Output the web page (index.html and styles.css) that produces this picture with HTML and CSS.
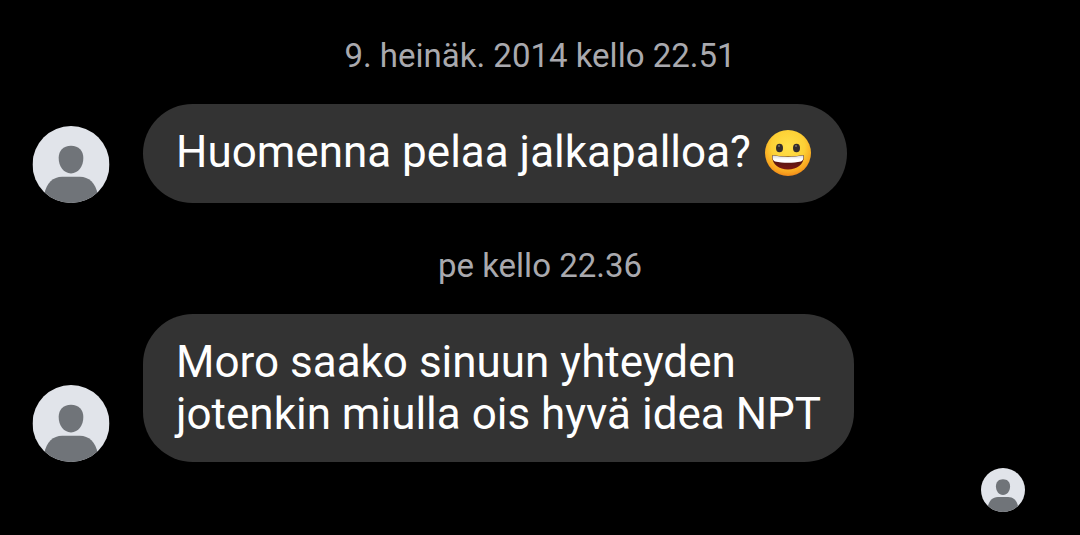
FILE: index.html
```
<!DOCTYPE html>
<html lang="fi">
<head>
    <meta charset="UTF-8">
    <meta name="viewport" content="width=device-width, initial-scale=1.0">
    <title>Keskustelu</title>
    <link rel="stylesheet" href="styles.css">
</head>
<body>
    <!-- Shared avatar picture -->
    <svg class="symbols" aria-hidden="true">
        <symbol id="avatar" viewBox="0 0 78 78">
            <clipPath id="avatar-clip"><circle cx="39" cy="39" r="39"/></clipPath>
            <g clip-path="url(#avatar-clip)">
                <rect width="78" height="78" fill="#e1e4ea"/>
                <path d="M39 20c8 0 12.500 5 12.500 12.500C51.500 41 46.500 48 39 48s-12.500-7-12.500-15.500C26.500 25 31 20 39 20z" fill="#707479"/>
                <path d="M12 78V69c2-11 9-17.500 18-17.500h18c9 0 16 6.500 18 17.500v9z" fill="#707479"/>
            </g>
        </symbol>
    </svg>

    <main class="chat">
        <time class="timestamp">9. heinäk. 2014 kello 22.51</time>
        <div class="message">
            <svg class="avatar" role="img" aria-label="Profiilikuva"><use href="#avatar"/></svg>
            <p class="bubble">Huomenna pelaa jalkapalloa?
                <svg class="emoji" viewBox="0 0 46 46" role="img" aria-label="Virnistävä naama">
                    <defs>
                        <radialGradient id="face" cx="50%" cy="36%" r="66%">
                            <stop offset="0" stop-color="#ffe14a"/>
                            <stop offset="0.55" stop-color="#fdd035"/>
                            <stop offset="0.85" stop-color="#f9a51f"/>
                            <stop offset="1" stop-color="#ee8318"/>
                        </radialGradient>
                        <linearGradient id="mouth" x1="0" y1="0" x2="0" y2="1">
                            <stop offset="0" stop-color="#3c1510"/>
                            <stop offset="1" stop-color="#7b1712"/>
                        </linearGradient>
                        <linearGradient id="teeth" x1="0" y1="0" x2="0" y2="1">
                            <stop offset="0" stop-color="#d8d8d8"/>
                            <stop offset="0.5" stop-color="#ffffff"/>
                        </linearGradient>
                    </defs>
                    <circle cx="23" cy="23" r="23" fill="url(#face)"/>
                    <ellipse cx="14.500" cy="18" rx="3.500" ry="4.300" fill="#332c2c"/>
                    <ellipse cx="31.500" cy="18" rx="3.500" ry="4.300" fill="#332c2c"/>
                    <circle cx="14" cy="16" r="1" fill="#77706a"/>
                    <circle cx="31" cy="16" r="1" fill="#77706a"/>
                    <path d="M7 26.500c0-1 .7-1.500 1.700-1.300 9 1.800 19.600 1.800 28.600 0 1-.2 1.700.3 1.700 1.300C38.500 34.500 32 39.500 23 39.500S7.500 34.500 7 26.500z" fill="url(#mouth)"/>
                    <path d="M7.500 26.500c0-.8.500-1 1.200-.9 9 1.900 19.600 1.900 28.600 0 .7-.1 1.200.1 1.200.9 0 2.500-.8 4.300-2.500 4.900-8 1.800-18 1.800-26 0-1.700-.6-2.500-2.400-2.500-4.900z" fill="url(#teeth)"/>
                </svg>
            </p>
        </div>

        <time class="timestamp">pe kello 22.36</time>
        <div class="message">
            <svg class="avatar" role="img" aria-label="Profiilikuva"><use href="#avatar"/></svg>
            <p class="bubble">Moro saako sinuun yhteyden<br>jotenkin miulla ois hyvä idea NPT</p>
        </div>

        <div class="seen">
            <svg class="avatar avatar-small" role="img" aria-label="Nähty"><use href="#avatar"/></svg>
        </div>
    </main>
</body>
</html>
```
FILE: styles.css
```
* {
    box-sizing: border-box;
}
body {
    margin: 0;
    background: #000;
    color: #fff;
    font-family: Roboto, "Liberation Sans", sans-serif;
}
.symbols {
    position: absolute;
    width: 0;
    height: 0;
}
.chat {
    display: flex;
    flex-direction: column;
    padding: 36px 32px 23px;
}
.timestamp {
    color: #a9a9ae;
    font-size: 33px;
    line-height: 40px;
    text-align: center;
}
.message {
    display: flex;
    align-items: flex-end;
    gap: 33px;
    margin-top: 28px;
}
.message + .timestamp {
    margin-top: 43px;
}
.avatar {
    flex: none;
    width: 78px;
    height: 77px;
}
.bubble {
    margin: 0;
    padding: 22px 33px;
    border-radius: 50px;
    background: #333;
    font-size: 44px;
    line-height: 52px;
}
.emoji {
    width: 46px;
    height: 52px;
    margin: 0 3px;
    padding: 1px 0 5px;
    vertical-align: -14px;
}
.seen {
    display: flex;
    justify-content: flex-end;
    margin-top: 6px;
    padding-right: 23px;
}
.avatar-small {
    width: 44px;
    height: 44px;
}
```
